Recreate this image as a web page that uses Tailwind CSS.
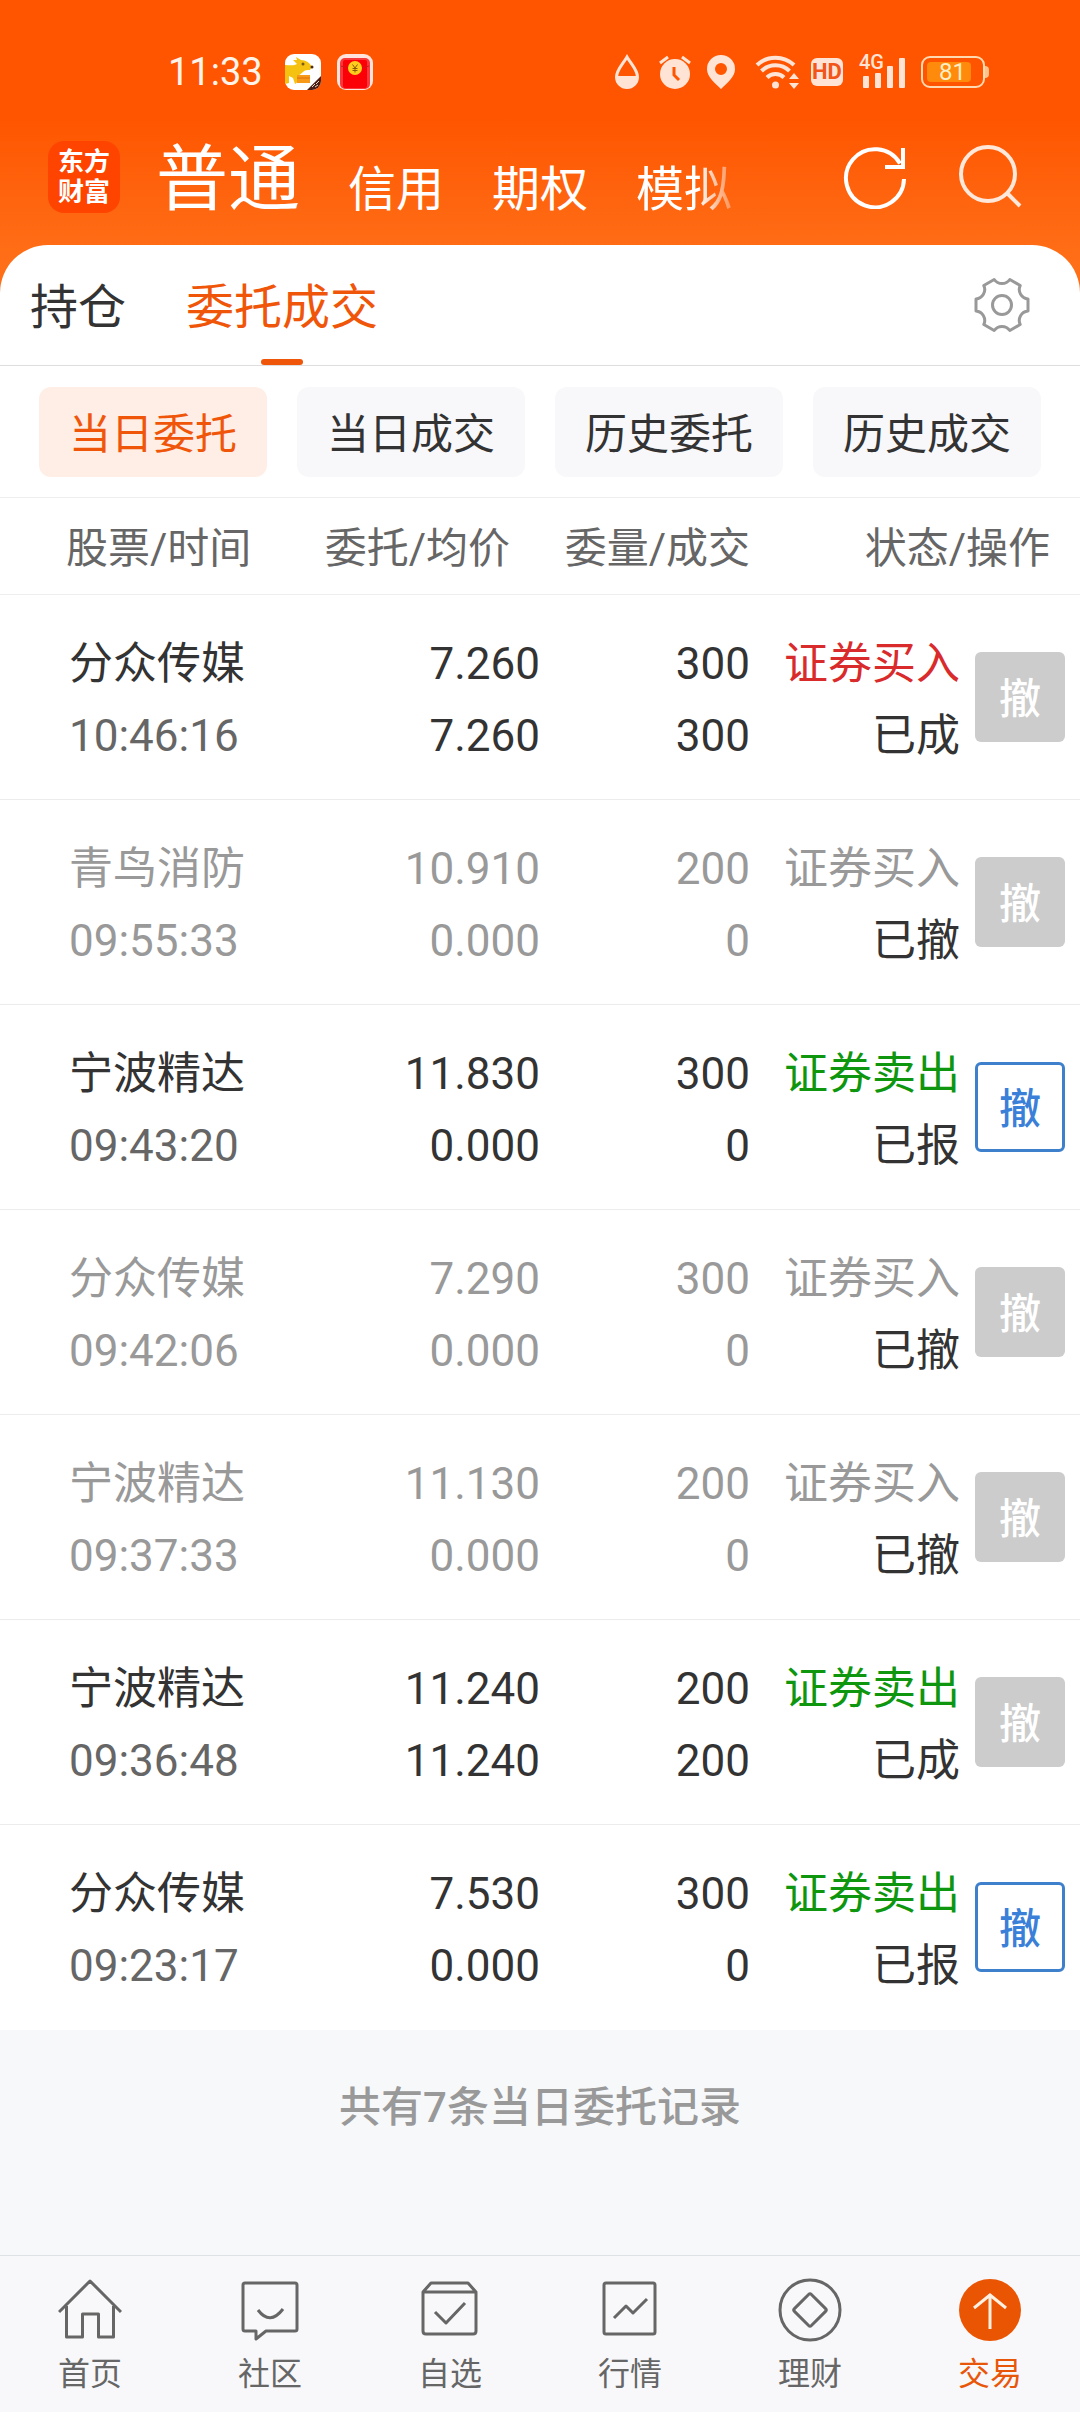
<!DOCTYPE html>
<html lang="zh-CN">
<head>
    <meta charset="UTF-8">
    <meta name="viewport" content="width=device-width, initial-scale=1.0">
    <title>委托成交</title>
    <script src="https://cdn.jsdelivr.net/npm/@tailwindcss/browser@4"></script>
</head>
<body class="bg-[#f7f8fa] min-h-screen flex flex-col font-[Roboto,'Noto_Sans_CJK_SC',sans-serif] text-[#333]">
    <header class="bg-linear-to-b from-[#ff5500] from-40% to-[#ff6f17] to-90% pb-12">
        <!-- Status bar -->
        <div class="flex items-center justify-between h-12 mt-12 pl-[168px] pr-[91px] text-[#ffe4d6]">
            <div class="flex items-center">
                <span class="text-[38px] leading-12 text-[#fff3ea]">11:33</span>
                <svg class="ml-[22px] w-9 h-9" viewBox="0 0 36 36">
                    <clipPath id="appClip"><rect width="36" height="36" rx="9"/></clipPath>
                    <g clip-path="url(#appClip)">
                        <rect width="36" height="36" fill="#fff"/>
                        <path d="M0 11C5 11 9 12 12 10L8 6 12 6 11 3 16 6C21 6 25 9 27 13L25 16C22 16 20 16 18 18L12 23C14 25 14 28 10 30L8 24 4 22 4 29 0 30Z" fill="#f5c211"/>
                        <circle cx="18" cy="10" r="1.500" fill="#7a5a20"/>
                        <circle cx="27" cy="13" r="1.500" fill="#4a2a18"/>
                        <path d="M12 21h13v8H12z" fill="#f79a1a"/>
                        <path d="M12 24h13" stroke="#e0700a"/>
                        <path d="M36 22V36H22Z" fill="#4a1e14"/>
                        <path d="M27 33l3-3M31 30l3-3M30 33l3-2" stroke="#e8d8c8"/>
                    </g>
                </svg>
                <svg class="ml-4 w-9 h-9" viewBox="0 0 36 36">
                    <rect width="36" height="36" rx="9" fill="#ffe3dc"/>
                    <rect x="3" y="4" width="30" height="31" rx="5" fill="#f8383a"/>
                    <rect x="6" y="6" width="24" height="28" rx="2" fill="#fb0006"/>
                    <path d="M4 12q14 5 28 0" fill="none" stroke="#d01818"/>
                    <circle cx="18" cy="14" r="7" fill="#ffce1c"/>
                    <path d="M15.500 10.500l2.500 3.500 2.500-3.500M18 14v4.500M15.500 14.500h5M15.500 16.500h5" fill="none" stroke="#8a5a08"/>
                </svg>
            </div>
            <div class="flex items-center">
                <svg class="w-6 h-9" viewBox="0 0 24 36" fill="none">
                    <path d="M12 3C8 10 1.500 16 1.500 23a10.500 10.500 0 0 0 21 0C22.500 16 16 10 12 3Z" stroke="currentColor" stroke-width="3"/>
                    <path d="M1 22H23C23 30 18 34 12 34S1 30 1 22Z" fill="currentColor"/>
                </svg>
                <svg class="ml-5 w-8 h-9" viewBox="0 0 32 36">
                    <circle cx="16" cy="20" r="15" fill="currentColor"/>
                    <path d="M1 9L9 3M31 9L23 3" stroke="currentColor" stroke-width="3"/>
                    <path d="M15 13v8l5 5" fill="none" stroke="#ff5500" stroke-width="3"/>
                </svg>
                <svg class="ml-4 w-7 h-9" viewBox="0 0 28 36">
                    <path fill-rule="evenodd" d="M14 1A14 14 0 0 0 0 15C0 23 8 29 14 35 20 29 28 23 28 15A14 14 0 0 0 14 1ZM14 9a6 6 0 1 1 0 12 6 6 0 0 1 0-12Z" fill="currentColor"/>
                </svg>
                <svg class="ml-5 w-12 h-9" viewBox="0 0 48 36" fill="none">
                    <path d="M2 11A27 27 0 0 1 39 11M6.500 17A20 20 0 0 1 34.500 17M12 23.500A12 12 0 0 1 29 23.500" stroke="currentColor" stroke-width="4"/>
                    <circle cx="20.500" cy="31" r="3.500" fill="currentColor"/>
                    <path d="M34 25l5-6 5 6zM34 29l5 6 5-6z" fill="currentColor"/>
                </svg>
                <span class="ml-2 w-8 h-7 rounded-md bg-[#ffe4d6] text-[#f2551a] text-[22px] leading-7 font-bold text-center">HD</span>
                <div class="ml-4 relative w-12 h-9">
                    <span class="absolute left-0 -top-1 text-xl leading-6 font-medium">4G</span>
                    <svg class="w-12 h-9" viewBox="0 0 48 36" fill="currentColor">
                        <rect x="4" y="22" width="6" height="12" rx="1"/><rect x="16" y="19" width="6" height="15" rx="1"/><rect x="28" y="12" width="6" height="22" rx="1"/><rect x="40" y="4" width="6" height="30" rx="1"/>
                    </svg>
                </div>
                <div class="ml-3.5 flex items-center">
                    <div class="w-16 h-8 rounded-[9px] border-2 border-[#ffd9b0] p-1">
                        <div class="w-11 h-5 rounded-sm bg-[#ff8a0c] text-[#ffeec4] text-2xl leading-5 pl-3">81</div>
                    </div>
                    <div class="w-1 h-3 rounded-r-sm bg-[#ffc48c]"></div>
                </div>
            </div>
        </div>
        <!-- Account types -->
        <div class="flex items-center h-[108px] mt-[27px] mb-3.5 pl-12 pr-14 text-white">
            <a href="#" class="w-18 h-18 rounded-2xl bg-[#ff4400] flex flex-col items-center justify-center text-[26px] leading-[30px] font-bold">
                <span>东方</span>
                <span>财富</span>
            </a>
            <nav class="ml-9 pt-1.5 flex items-end gap-12 text-5xl leading-[88px]">
                <button class="text-7xl leading-[108px]">普通</button>
                <button>信用</button>
                <button>期权</button>
                <button class="[mask-image:linear-gradient(to_right,#000_64%,transparent_115%)]">模拟</button>
            </nav>
            <button class="ml-auto" aria-label="刷新">
                <svg class="w-16 h-16" viewBox="0 0 64 64" fill="none" stroke="currentColor" stroke-width="4">
                    <path d="M61 34A29 29 0 1 1 57 18.500"/>
                    <path d="M60 3V22H42"/>
                </svg>
            </button>
            <button class="ml-[51px]" aria-label="搜索">
                <svg class="w-[66px] h-16" viewBox="0 0 66 64" fill="none" stroke="#ffe8da" stroke-width="4">
                    <circle cx="30" cy="29" r="27"/>
                    <path d="M49 48L62 61"/>
                </svg>
            </button>
        </div>
    </header>

    <main class="-mt-12 flex-1">
        <section class="bg-white rounded-t-[48px]">
            <div class="flex items-center h-[121px] pl-[30px] pr-[50px] border-b border-[#dedede] text-5xl">
                <button class="h-full pt-1.5">持仓</button>
                <button class="h-full pt-1.5 ml-[60px] relative text-[#f0560a]">委托成交
                    <span class="absolute bottom-0 left-1/2 -translate-x-1/2 w-[42px] h-1.5 rounded-full bg-[#f0560a]"></span>
                </button>
                <button class="ml-auto" aria-label="设置">
                    <svg class="w-14 h-14" viewBox="-28 -28 56 56" fill="none" stroke="#999" stroke-width="3" stroke-linejoin="round">
                        <path d="M26-6V6A9.500 9.500 0 0 0 18.200 19.500L7.800 25.500A9.500 9.500 0 0 0-7.800 25.500L-18.200 19.500A9.500 9.500 0 0 0-26 6V-6A9.500 9.500 0 0 0-18.200-19.500L-7.800-25.500A9.500 9.500 0 0 0 7.800-25.500L18.200-19.500A9.500 9.500 0 0 0 26-6Z"/>
                        <circle r="9.500"/>
                    </svg>
                </button>
            </div>
            <div class="grid grid-cols-4 gap-[30px] px-[39px] pt-[21px] pb-5 text-[42px]">
                <button class="h-[90px] pt-1 rounded-xl bg-[#ffeee6] text-[#f0560a]">当日委托</button>
                <button class="h-[90px] pt-1 rounded-xl bg-[#f8f8fa]">当日成交</button>
                <button class="h-[90px] pt-1 rounded-xl bg-[#f8f8fa]">历史委托</button>
                <button class="h-[90px] pt-1 rounded-xl bg-[#f8f8fa]">历史成交</button>
            </div>
            <table class="w-full table-fixed border-collapse text-right text-[44px] leading-[72px]">
                <colgroup>
                    <col class="w-1/4">
                    <col class="w-1/4">
                    <col class="w-[210px]">
                    <col class="w-[210px]">
                    <col class="w-[120px]">
                </colgroup>
                <thead class="text-[42px] text-[#666]">
                    <tr class="h-[97px] border-y border-[#eee]">
                        <th class="pt-1.5 pl-[66px] font-normal text-left">股票/时间</th>
                        <th class="pt-1.5 pr-[30px] font-normal">委托/均价</th>
                        <th class="pt-1.5 font-normal whitespace-nowrap">委量/成交</th>
                        <th class="pt-1.5 pr-[30px] font-normal" colspan="2">状态/操作</th>
                    </tr>
                </thead>
                <tbody id="orders"></tbody>
            </table>
        </section>
        <p class="pt-[42px] pb-10 text-center text-[42px] leading-[72px] font-medium text-[#999]">共有7条当日委托记录</p>
    </main>

    <!-- Bottom tabs -->
    <nav class="grid grid-cols-6 h-[157px] pt-[22px] border-t border-[#dfe2e4] bg-[#f8f8fa] text-[32px] leading-12 text-[#666]">
        <a href="#" class="flex flex-col items-center gap-2">
            <svg class="w-16 h-16" viewBox="0 0 64 64" fill="none" stroke="currentColor" stroke-width="3" stroke-linejoin="round">
                <path d="M1 34L32 3 63 34M8.500 28V59H24.500V36H40.500V59H55.500V28"/>
            </svg>
            首页
        </a>
        <a href="#" class="flex flex-col items-center gap-2">
            <svg class="w-16 h-16" viewBox="0 0 64 64" fill="none" stroke="currentColor" stroke-width="3" stroke-linejoin="round">
                <path d="M7 5H57Q59 5 59 7V51Q59 53 57 53H28L18 61V53H7Q5 53 5 51V7Q5 5 7 5Z"/>
                <path d="M20 32Q32 48 45 31"/>
            </svg>
            社区
        </a>
        <a href="#" class="flex flex-col items-center gap-2">
            <svg class="w-16 h-16" viewBox="0 0 64 64" fill="none" stroke="currentColor" stroke-width="3" stroke-linejoin="round">
                <path d="M5 14L13 5H50L58 14V53Q58 56 55 56H8Q5 56 5 53ZM5 14H58M17 34L28 45 47 25"/>
            </svg>
            自选
        </a>
        <a href="#" class="flex flex-col items-center gap-2">
            <svg class="w-16 h-16" viewBox="0 0 64 64" fill="none" stroke="currentColor" stroke-width="3" stroke-linejoin="round">
                <rect x="6" y="5" width="51" height="51" rx="2"/>
                <path d="M16 40L28 28 35 35 49 21"/>
            </svg>
            行情
        </a>
        <a href="#" class="flex flex-col items-center gap-2">
            <svg class="w-16 h-16" viewBox="0 0 64 64" fill="none" stroke="currentColor" stroke-width="3" stroke-linejoin="round">
                <circle cx="32" cy="32" r="30"/>
                <rect x="20" y="20" width="24" height="24" rx="2" transform="rotate(45 32 32)"/>
            </svg>
            理财
        </a>
        <a href="#" class="flex flex-col items-center gap-2 text-[#e8560a]">
            <svg class="w-16 h-16" viewBox="0 0 64 64" fill="none" stroke="#fff0e0" stroke-width="3">
                <circle cx="32" cy="32" r="31" fill="#ea5504" stroke="none"/>
                <path d="M32 51V17M16 30L32 17 48 30"/>
            </svg>
            交易
        </a>
    </nav>

    <script>
        // state: done = filled, canceled = withdrawn, open = can still be withdrawn
        const orders = [
            { name: '分众传媒', time: '10:46:16', price: '7.260', avg: '7.260', qty: 300, filled: 300, side: '买入', state: 'done' },
            { name: '青鸟消防', time: '09:55:33', price: '10.910', avg: '0.000', qty: 200, filled: 0, side: '买入', state: 'canceled' },
            { name: '宁波精达', time: '09:43:20', price: '11.830', avg: '0.000', qty: 300, filled: 0, side: '卖出', state: 'open' },
            { name: '分众传媒', time: '09:42:06', price: '7.290', avg: '0.000', qty: 300, filled: 0, side: '买入', state: 'canceled' },
            { name: '宁波精达', time: '09:37:33', price: '11.130', avg: '0.000', qty: 200, filled: 0, side: '买入', state: 'canceled' },
            { name: '宁波精达', time: '09:36:48', price: '11.240', avg: '11.240', qty: 200, filled: 200, side: '卖出', state: 'done' },
            { name: '分众传媒', time: '09:23:17', price: '7.530', avg: '0.000', qty: 300, filled: 0, side: '卖出', state: 'open' }
        ];
        const stateText = { done: '已成', canceled: '已撤', open: '已报' };

        document.getElementById('orders').innerHTML = orders.map(o => {
            const canceled = o.state === 'canceled';
            const rowColor = canceled ? 'text-[#999]' : 'text-[#333]';
            const timeColor = canceled ? 'text-[#999]' : 'text-[#666]';
            const sideColor = canceled ? 'text-[#999]' : o.side === '买入' ? 'text-[#d92b2b]' : 'text-[#0f960f]';
            const btn = o.state === 'open'
                ? 'border-3 border-[#3f80cc] text-[#3a7fd8]'
                : 'bg-[#ccc] text-white';
            return `
                <tr class="h-[205px] border-b border-[#ececec] last:border-b-0 ${rowColor}">
                    <td class="pt-1.5 pl-[69px] text-left whitespace-nowrap">${o.name}<br><span class="${timeColor}">${o.time}</span></td>
                    <td class="pt-1.5">${o.price}<br>${o.avg}</td>
                    <td class="pt-1.5">${o.qty}<br>${o.filled}</td>
                    <td class="pt-1.5"><span class="${sideColor}">证券${o.side}</span><br><span class="text-[#333]">${stateText[o.state]}</span></td>
                    <td class="pr-[15px]"><button class="block ml-auto w-[90px] h-[90px] pt-1.5 rounded-md text-[42px] leading-none font-medium ${btn}" ${o.state === 'open' ? '' : 'disabled'}>撤</button></td>
                </tr>`;
        }).join('');
    </script>
</body>
</html>
